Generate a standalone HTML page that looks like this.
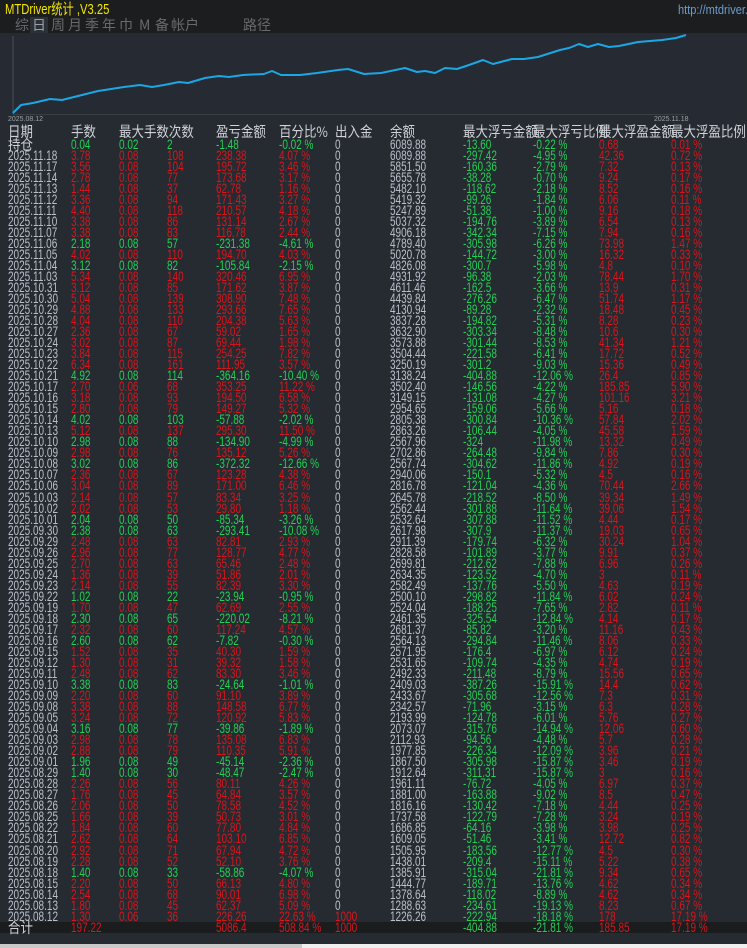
<!DOCTYPE html>
<html><head><meta charset="utf-8">
<style>
*{margin:0;padding:0;box-sizing:border-box}
html,body{width:747px;height:948px;overflow:hidden;background:#262a31;font-family:"Liberation Sans","Noto Sans CJK SC",sans-serif}
#top{position:absolute;left:0;top:0;width:747px;height:33px;background:#1c1d1f}
#title{position:absolute;left:5px;top:1px;color:#f2e600;font-size:15px;line-height:18px;transform:scaleX(0.75);transform-origin:0 0;white-space:nowrap}
#url{position:absolute;left:678px;top:2px;color:#6c9ccc;font-size:13px;transform:scaleX(0.85);transform-origin:0 0;white-space:nowrap}
.tab{position:absolute;top:16px;color:#686a6e;font-size:14px;font-family:"Noto Sans CJK SC",sans-serif;line-height:18px}
#chart{position:absolute;left:0;top:33px;width:745px;height:90px;background:#262b33}
.hd{position:absolute;top:123px;font-size:14.5px;color:#cfd3d8;font-family:"Noto Sans CJK SC",sans-serif;line-height:18px;white-space:nowrap;transform:scaleX(0.86);transform-origin:0 0}
#tb{position:absolute;left:0;top:138.5px;width:747px}
.r{position:relative;height:11.04px;line-height:11px;font-size:13.5px;white-space:nowrap}
.r i{font-style:normal;position:absolute;top:0;display:inline-block;transform:scaleX(0.74);transform-origin:0 50%;color:#b9c0ca}
.r i:nth-child(1){left:8px}
.r i:nth-child(2){left:71px}
.r i:nth-child(3){left:119px}
.r i:nth-child(4){left:167px}
.r i:nth-child(5){left:216px}
.r i:nth-child(6){left:279px}
.r i:nth-child(7){left:335px}
.r i:nth-child(8){left:390px}
.r i:nth-child(9){left:463px;color:#22d055}
.r i:nth-child(10){left:533px;color:#22d055}
.r i:nth-child(11){left:599px;color:#d8161c}
.r i:nth-child(12){left:671px;color:#d8161c}
.R i:nth-child(n+2):nth-child(-n+6){color:#d8161c}
.G i:nth-child(n+2):nth-child(-n+6){color:#22d055}
.r i.rd{color:#d8161c}
.r i.cj{font-family:"Noto Sans CJK SC",sans-serif;transform:scaleX(0.86);font-size:14.5px;color:#cfd3d8}
#tot{background:#1b1c1e}
#sb1{position:absolute;left:0;top:944px;width:302px;height:4px;background:#c9c9c9}
#sb2{position:absolute;left:302px;top:944px;width:445px;height:4px;background:#efefef}
</style></head><body>
<div id="top"></div>
<div id="title">MTDriver统计 ,V3.25</div>
<div id="url">http://mtdriver.</div>
<div style="position:absolute;left:30px;top:17px;width:18px;height:16px;background:#2c3138"></div>
<div class="tab" style="left:15px">综</div>
<div class="tab" style="left:32px;color:#9aa0a8">日</div>
<div class="tab" style="left:51px">周</div>
<div class="tab" style="left:68px">月</div>
<div class="tab" style="left:85px">季</div>
<div class="tab" style="left:102px">年</div>
<div class="tab" style="left:119px">巾</div>
<div class="tab" style="left:139px">M</div>
<div class="tab" style="left:155px">备</div>
<div class="tab" style="left:171px">帐户</div>
<div class="tab" style="left:243px">路径</div>
<div id="chart"></div>
<svg style="position:absolute;left:0;top:0" width="747" height="130">
<line x1="13" y1="36" x2="13" y2="114" stroke="#4a4f56" stroke-width="1"/>
<line x1="13" y1="114.5" x2="686" y2="114.5" stroke="#3a3f46" stroke-width="1"/>
<polyline fill="none" stroke="#1ba6e4" stroke-width="2" stroke-linejoin="round" points="13,113 21,105 33,103 50,99 62,100 74,97 98,91 124,87 140,85 152,87 164,85 179,82 188,83 205,78 219,76 229,77 243,75 264,74 272,71 281,75 300,75 317,73 338,70 348,69 364,74 381,73 405,68 417,72 425,71 435,73 445,68 457,69 469,65 483,60 493,64 512,59 524,59 538,57 560,50 569,48 579,44 588,47 598,44 609,47 619,46 638,42 650,41 662,40 676,38 686,35"/>
<text x="8" y="121" font-size="7" fill="#9aa0a8" font-family="Liberation Sans">2025.08.12</text>
<text x="654" y="121" font-size="7" fill="#9aa0a8" font-family="Liberation Sans">2025.11.18</text>
</svg>
<div class="hd" style="left:8px">日期</div>
<div class="hd" style="left:71px">手数</div>
<div class="hd" style="left:119px">最大手数次数</div>
<div class="hd" style="left:216px">盈亏金额</div>
<div class="hd" style="left:279px">百分比%</div>
<div class="hd" style="left:335px">出入金</div>
<div class="hd" style="left:390px">余额</div>
<div class="hd" style="left:463px">最大浮亏金额</div>
<div class="hd" style="left:533px">最大浮亏比例</div>
<div class="hd" style="left:599px">最大浮盈金额</div>
<div class="hd" style="left:671px">最大浮盈比例</div>
<div id="tb">
<div class="r G"><i class="cj">持仓</i><i>0.04</i><i>0.02</i><i>2</i><i>-1.48</i><i>-0.02 %</i><i>0</i><i>6089.88</i><i>-13.60</i><i>-0.22 %</i><i>0.68</i><i>0.01 %</i></div>
<div class="r R"><i>2025.11.18</i><i>3.78</i><i>0.08</i><i>108</i><i>238.38</i><i>4.07 %</i><i>0</i><i>6089.88</i><i>-297.42</i><i>-4.95 %</i><i>42.36</i><i>0.72 %</i></div>
<div class="r R"><i>2025.11.17</i><i>3.56</i><i>0.08</i><i>104</i><i>195.72</i><i>3.46 %</i><i>0</i><i>5851.50</i><i>-160.36</i><i>-2.79 %</i><i>7.32</i><i>0.13 %</i></div>
<div class="r R"><i>2025.11.14</i><i>2.78</i><i>0.08</i><i>77</i><i>173.68</i><i>3.17 %</i><i>0</i><i>5655.78</i><i>-38.28</i><i>-0.70 %</i><i>9.24</i><i>0.17 %</i></div>
<div class="r R"><i>2025.11.13</i><i>1.44</i><i>0.08</i><i>37</i><i>62.78</i><i>1.16 %</i><i>0</i><i>5482.10</i><i>-118.62</i><i>-2.18 %</i><i>8.52</i><i>0.16 %</i></div>
<div class="r R"><i>2025.11.12</i><i>3.36</i><i>0.08</i><i>94</i><i>171.43</i><i>3.27 %</i><i>0</i><i>5419.32</i><i>-99.26</i><i>-1.84 %</i><i>6.06</i><i>0.11 %</i></div>
<div class="r R"><i>2025.11.11</i><i>4.40</i><i>0.08</i><i>118</i><i>210.57</i><i>4.18 %</i><i>0</i><i>5247.89</i><i>-51.38</i><i>-1.00 %</i><i>9.16</i><i>0.18 %</i></div>
<div class="r R"><i>2025.11.10</i><i>3.38</i><i>0.08</i><i>86</i><i>131.14</i><i>2.67 %</i><i>0</i><i>5037.32</i><i>-194.76</i><i>-3.89 %</i><i>6.54</i><i>0.13 %</i></div>
<div class="r R"><i>2025.11.07</i><i>3.38</i><i>0.08</i><i>83</i><i>116.78</i><i>2.44 %</i><i>0</i><i>4906.18</i><i>-342.34</i><i>-7.15 %</i><i>7.94</i><i>0.16 %</i></div>
<div class="r G"><i>2025.11.06</i><i>2.18</i><i>0.08</i><i>57</i><i>-231.38</i><i>-4.61 %</i><i>0</i><i>4789.40</i><i>-305.98</i><i>-6.26 %</i><i>73.98</i><i>1.47 %</i></div>
<div class="r R"><i>2025.11.05</i><i>4.02</i><i>0.08</i><i>110</i><i>194.70</i><i>4.03 %</i><i>0</i><i>5020.78</i><i>-144.72</i><i>-3.00 %</i><i>16.32</i><i>0.33 %</i></div>
<div class="r G"><i>2025.11.04</i><i>3.12</i><i>0.08</i><i>82</i><i>-105.84</i><i>-2.15 %</i><i>0</i><i>4826.08</i><i>-300.7</i><i>-5.98 %</i><i>4.8</i><i>0.10 %</i></div>
<div class="r R"><i>2025.11.03</i><i>5.34</i><i>0.08</i><i>140</i><i>320.46</i><i>6.95 %</i><i>0</i><i>4931.92</i><i>-96.38</i><i>-2.03 %</i><i>78.44</i><i>1.70 %</i></div>
<div class="r R"><i>2025.10.31</i><i>3.12</i><i>0.08</i><i>85</i><i>171.62</i><i>3.87 %</i><i>0</i><i>4611.46</i><i>-162.5</i><i>-3.66 %</i><i>13.9</i><i>0.31 %</i></div>
<div class="r R"><i>2025.10.30</i><i>5.04</i><i>0.08</i><i>139</i><i>308.90</i><i>7.48 %</i><i>0</i><i>4439.84</i><i>-276.26</i><i>-6.47 %</i><i>51.74</i><i>1.17 %</i></div>
<div class="r R"><i>2025.10.29</i><i>4.88</i><i>0.08</i><i>133</i><i>293.66</i><i>7.65 %</i><i>0</i><i>4130.94</i><i>-89.28</i><i>-2.32 %</i><i>18.48</i><i>0.45 %</i></div>
<div class="r R"><i>2025.10.28</i><i>4.04</i><i>0.08</i><i>110</i><i>204.38</i><i>5.63 %</i><i>0</i><i>3837.28</i><i>-194.82</i><i>-5.31 %</i><i>8.28</i><i>0.23 %</i></div>
<div class="r R"><i>2025.10.27</i><i>2.36</i><i>0.08</i><i>67</i><i>59.02</i><i>1.65 %</i><i>0</i><i>3632.90</i><i>-303.34</i><i>-8.48 %</i><i>10.6</i><i>0.30 %</i></div>
<div class="r R"><i>2025.10.24</i><i>3.02</i><i>0.08</i><i>87</i><i>69.44</i><i>1.98 %</i><i>0</i><i>3573.88</i><i>-301.44</i><i>-8.53 %</i><i>41.34</i><i>1.21 %</i></div>
<div class="r R"><i>2025.10.23</i><i>3.84</i><i>0.08</i><i>115</i><i>254.25</i><i>7.82 %</i><i>0</i><i>3504.44</i><i>-221.58</i><i>-6.41 %</i><i>17.72</i><i>0.52 %</i></div>
<div class="r R"><i>2025.10.22</i><i>6.34</i><i>0.08</i><i>161</i><i>111.95</i><i>3.57 %</i><i>0</i><i>3250.19</i><i>-301.2</i><i>-9.03 %</i><i>15.36</i><i>0.49 %</i></div>
<div class="r G"><i>2025.10.21</i><i>4.92</i><i>0.08</i><i>114</i><i>-364.16</i><i>-10.40 %</i><i>0</i><i>3138.24</i><i>-404.88</i><i>-12.06 %</i><i>26.4</i><i>0.85 %</i></div>
<div class="r R"><i>2025.10.17</i><i>2.70</i><i>0.06</i><i>68</i><i>353.25</i><i>11.22 %</i><i>0</i><i>3502.40</i><i>-146.56</i><i>-4.22 %</i><i>185.85</i><i>5.90 %</i></div>
<div class="r R"><i>2025.10.16</i><i>3.18</i><i>0.08</i><i>93</i><i>194.50</i><i>6.58 %</i><i>0</i><i>3149.15</i><i>-131.08</i><i>-4.27 %</i><i>101.16</i><i>3.21 %</i></div>
<div class="r R"><i>2025.10.15</i><i>2.80</i><i>0.08</i><i>79</i><i>149.27</i><i>5.32 %</i><i>0</i><i>2954.65</i><i>-159.06</i><i>-5.66 %</i><i>5.16</i><i>0.18 %</i></div>
<div class="r G"><i>2025.10.14</i><i>4.02</i><i>0.08</i><i>103</i><i>-57.88</i><i>-2.02 %</i><i>0</i><i>2805.38</i><i>-300.84</i><i>-10.36 %</i><i>57.84</i><i>2.02 %</i></div>
<div class="r R"><i>2025.10.13</i><i>5.12</i><i>0.08</i><i>137</i><i>295.30</i><i>11.50 %</i><i>0</i><i>2863.26</i><i>-106.44</i><i>-4.05 %</i><i>45.58</i><i>1.59 %</i></div>
<div class="r G"><i>2025.10.10</i><i>2.98</i><i>0.08</i><i>88</i><i>-134.90</i><i>-4.99 %</i><i>0</i><i>2567.96</i><i>-324</i><i>-11.98 %</i><i>13.32</i><i>0.49 %</i></div>
<div class="r R"><i>2025.10.09</i><i>2.98</i><i>0.08</i><i>76</i><i>135.12</i><i>5.26 %</i><i>0</i><i>2702.86</i><i>-264.48</i><i>-9.84 %</i><i>7.86</i><i>0.30 %</i></div>
<div class="r G"><i>2025.10.08</i><i>3.02</i><i>0.08</i><i>86</i><i>-372.32</i><i>-12.66 %</i><i>0</i><i>2567.74</i><i>-304.62</i><i>-11.86 %</i><i>4.92</i><i>0.19 %</i></div>
<div class="r R"><i>2025.10.07</i><i>2.36</i><i>0.08</i><i>67</i><i>123.28</i><i>4.38 %</i><i>0</i><i>2940.06</i><i>-150.1</i><i>-5.32 %</i><i>4.5</i><i>0.16 %</i></div>
<div class="r R"><i>2025.10.06</i><i>3.04</i><i>0.08</i><i>89</i><i>171.00</i><i>6.46 %</i><i>0</i><i>2816.78</i><i>-121.04</i><i>-4.36 %</i><i>70.44</i><i>2.66 %</i></div>
<div class="r R"><i>2025.10.03</i><i>2.14</i><i>0.08</i><i>57</i><i>83.34</i><i>3.25 %</i><i>0</i><i>2645.78</i><i>-218.52</i><i>-8.50 %</i><i>39.34</i><i>1.49 %</i></div>
<div class="r R"><i>2025.10.02</i><i>2.02</i><i>0.08</i><i>53</i><i>29.80</i><i>1.18 %</i><i>0</i><i>2562.44</i><i>-301.88</i><i>-11.64 %</i><i>39.06</i><i>1.54 %</i></div>
<div class="r G"><i>2025.10.01</i><i>2.04</i><i>0.08</i><i>50</i><i>-85.34</i><i>-3.26 %</i><i>0</i><i>2532.64</i><i>-307.88</i><i>-11.52 %</i><i>4.44</i><i>0.17 %</i></div>
<div class="r G"><i>2025.09.30</i><i>2.38</i><i>0.08</i><i>63</i><i>-293.41</i><i>-10.08 %</i><i>0</i><i>2617.98</i><i>-307.9</i><i>-11.37 %</i><i>19.03</i><i>0.65 %</i></div>
<div class="r R"><i>2025.09.29</i><i>2.48</i><i>0.08</i><i>63</i><i>82.81</i><i>2.93 %</i><i>0</i><i>2911.39</i><i>-179.74</i><i>-6.32 %</i><i>30.24</i><i>1.04 %</i></div>
<div class="r R"><i>2025.09.26</i><i>2.96</i><i>0.08</i><i>77</i><i>128.77</i><i>4.77 %</i><i>0</i><i>2828.58</i><i>-101.89</i><i>-3.77 %</i><i>9.91</i><i>0.37 %</i></div>
<div class="r R"><i>2025.09.25</i><i>2.70</i><i>0.08</i><i>63</i><i>65.46</i><i>2.48 %</i><i>0</i><i>2699.81</i><i>-212.62</i><i>-7.88 %</i><i>6.96</i><i>0.26 %</i></div>
<div class="r R"><i>2025.09.24</i><i>1.36</i><i>0.08</i><i>39</i><i>51.86</i><i>2.01 %</i><i>0</i><i>2634.35</i><i>-123.52</i><i>-4.70 %</i><i>3</i><i>0.11 %</i></div>
<div class="r R"><i>2025.09.23</i><i>2.14</i><i>0.08</i><i>55</i><i>82.39</i><i>3.30 %</i><i>0</i><i>2582.49</i><i>-137.76</i><i>-5.50 %</i><i>4.63</i><i>0.19 %</i></div>
<div class="r G"><i>2025.09.22</i><i>1.02</i><i>0.08</i><i>22</i><i>-23.94</i><i>-0.95 %</i><i>0</i><i>2500.10</i><i>-298.82</i><i>-11.84 %</i><i>6.02</i><i>0.24 %</i></div>
<div class="r R"><i>2025.09.19</i><i>1.70</i><i>0.08</i><i>47</i><i>62.69</i><i>2.55 %</i><i>0</i><i>2524.04</i><i>-188.25</i><i>-7.65 %</i><i>2.82</i><i>0.11 %</i></div>
<div class="r G"><i>2025.09.18</i><i>2.30</i><i>0.08</i><i>65</i><i>-220.02</i><i>-8.21 %</i><i>0</i><i>2461.35</i><i>-325.54</i><i>-12.84 %</i><i>4.14</i><i>0.17 %</i></div>
<div class="r R"><i>2025.09.17</i><i>2.32</i><i>0.08</i><i>60</i><i>117.24</i><i>4.57 %</i><i>0</i><i>2681.37</i><i>-85.82</i><i>-3.20 %</i><i>11.16</i><i>0.43 %</i></div>
<div class="r G"><i>2025.09.16</i><i>2.60</i><i>0.08</i><i>62</i><i>-7.82</i><i>-0.30 %</i><i>0</i><i>2564.13</i><i>-294.84</i><i>-11.46 %</i><i>8.06</i><i>0.33 %</i></div>
<div class="r R"><i>2025.09.15</i><i>1.52</i><i>0.08</i><i>35</i><i>40.30</i><i>1.59 %</i><i>0</i><i>2571.95</i><i>-176.4</i><i>-6.97 %</i><i>6.12</i><i>0.24 %</i></div>
<div class="r R"><i>2025.09.12</i><i>1.30</i><i>0.08</i><i>31</i><i>39.32</i><i>1.58 %</i><i>0</i><i>2531.65</i><i>-109.74</i><i>-4.35 %</i><i>4.74</i><i>0.19 %</i></div>
<div class="r R"><i>2025.09.11</i><i>2.48</i><i>0.08</i><i>62</i><i>83.30</i><i>3.46 %</i><i>0</i><i>2492.33</i><i>-211.48</i><i>-8.79 %</i><i>15.56</i><i>0.65 %</i></div>
<div class="r G"><i>2025.09.10</i><i>3.38</i><i>0.08</i><i>83</i><i>-24.64</i><i>-1.01 %</i><i>0</i><i>2409.03</i><i>-387.26</i><i>-15.91 %</i><i>14.4</i><i>0.62 %</i></div>
<div class="r R"><i>2025.09.09</i><i>2.20</i><i>0.08</i><i>60</i><i>91.10</i><i>3.89 %</i><i>0</i><i>2433.67</i><i>-305.68</i><i>-12.56 %</i><i>7.3</i><i>0.31 %</i></div>
<div class="r R"><i>2025.09.08</i><i>3.38</i><i>0.08</i><i>88</i><i>148.58</i><i>6.77 %</i><i>0</i><i>2342.57</i><i>-71.96</i><i>-3.15 %</i><i>6.3</i><i>0.28 %</i></div>
<div class="r R"><i>2025.09.05</i><i>3.24</i><i>0.08</i><i>72</i><i>120.92</i><i>5.83 %</i><i>0</i><i>2193.99</i><i>-124.78</i><i>-6.01 %</i><i>5.76</i><i>0.27 %</i></div>
<div class="r G"><i>2025.09.04</i><i>3.16</i><i>0.08</i><i>77</i><i>-39.86</i><i>-1.89 %</i><i>0</i><i>2073.07</i><i>-315.76</i><i>-14.94 %</i><i>12.06</i><i>0.60 %</i></div>
<div class="r R"><i>2025.09.03</i><i>2.98</i><i>0.08</i><i>78</i><i>135.08</i><i>6.83 %</i><i>0</i><i>2112.93</i><i>-94.56</i><i>-4.48 %</i><i>5.7</i><i>0.28 %</i></div>
<div class="r R"><i>2025.09.02</i><i>2.88</i><i>0.08</i><i>79</i><i>110.35</i><i>5.91 %</i><i>0</i><i>1977.85</i><i>-226.34</i><i>-12.09 %</i><i>3.96</i><i>0.21 %</i></div>
<div class="r G"><i>2025.09.01</i><i>1.96</i><i>0.08</i><i>49</i><i>-45.14</i><i>-2.36 %</i><i>0</i><i>1867.50</i><i>-305.98</i><i>-15.87 %</i><i>3.46</i><i>0.19 %</i></div>
<div class="r G"><i>2025.08.29</i><i>1.40</i><i>0.08</i><i>30</i><i>-48.47</i><i>-2.47 %</i><i>0</i><i>1912.64</i><i>-311.31</i><i>-15.87 %</i><i>3</i><i>0.16 %</i></div>
<div class="r R"><i>2025.08.28</i><i>2.26</i><i>0.08</i><i>56</i><i>80.11</i><i>4.26 %</i><i>0</i><i>1961.11</i><i>-76.72</i><i>-4.05 %</i><i>6.97</i><i>0.37 %</i></div>
<div class="r R"><i>2025.08.27</i><i>1.76</i><i>0.08</i><i>45</i><i>64.84</i><i>3.57 %</i><i>0</i><i>1881.00</i><i>-163.88</i><i>-9.02 %</i><i>8.5</i><i>0.47 %</i></div>
<div class="r R"><i>2025.08.26</i><i>2.06</i><i>0.08</i><i>50</i><i>78.58</i><i>4.52 %</i><i>0</i><i>1816.16</i><i>-130.42</i><i>-7.18 %</i><i>4.44</i><i>0.25 %</i></div>
<div class="r R"><i>2025.08.25</i><i>1.66</i><i>0.08</i><i>39</i><i>50.73</i><i>3.01 %</i><i>0</i><i>1737.58</i><i>-122.79</i><i>-7.28 %</i><i>3.24</i><i>0.19 %</i></div>
<div class="r R"><i>2025.08.22</i><i>1.84</i><i>0.08</i><i>60</i><i>77.80</i><i>4.84 %</i><i>0</i><i>1686.85</i><i>-64.16</i><i>-3.98 %</i><i>3.98</i><i>0.25 %</i></div>
<div class="r R"><i>2025.08.21</i><i>2.62</i><i>0.08</i><i>64</i><i>103.10</i><i>6.85 %</i><i>0</i><i>1609.05</i><i>-51.46</i><i>-3.41 %</i><i>12.72</i><i>0.82 %</i></div>
<div class="r R"><i>2025.08.20</i><i>2.92</i><i>0.08</i><i>71</i><i>67.94</i><i>4.72 %</i><i>0</i><i>1505.95</i><i>-183.56</i><i>-12.77 %</i><i>4.5</i><i>0.30 %</i></div>
<div class="r R"><i>2025.08.19</i><i>2.28</i><i>0.08</i><i>52</i><i>52.10</i><i>3.76 %</i><i>0</i><i>1438.01</i><i>-209.4</i><i>-15.11 %</i><i>5.22</i><i>0.38 %</i></div>
<div class="r G"><i>2025.08.18</i><i>1.40</i><i>0.08</i><i>33</i><i>-58.86</i><i>-4.07 %</i><i>0</i><i>1385.91</i><i>-315.04</i><i>-21.81 %</i><i>9.34</i><i>0.65 %</i></div>
<div class="r R"><i>2025.08.15</i><i>2.20</i><i>0.08</i><i>50</i><i>66.13</i><i>4.80 %</i><i>0</i><i>1444.77</i><i>-189.71</i><i>-13.76 %</i><i>4.62</i><i>0.34 %</i></div>
<div class="r R"><i>2025.08.14</i><i>2.54</i><i>0.08</i><i>68</i><i>90.01</i><i>6.98 %</i><i>0</i><i>1378.64</i><i>-118.02</i><i>-8.89 %</i><i>4.62</i><i>0.34 %</i></div>
<div class="r R"><i>2025.08.13</i><i>1.80</i><i>0.08</i><i>45</i><i>62.37</i><i>5.09 %</i><i>0</i><i>1288.63</i><i>-234.61</i><i>-19.13 %</i><i>8.23</i><i>0.67 %</i></div>
<div class="r R"><i>2025.08.12</i><i>1.30</i><i>0.06</i><i>36</i><i>226.26</i><i>22.63 %</i><i class="rd">1000</i><i>1226.26</i><i>-222.94</i><i>-18.18 %</i><i>178</i><i>17.19 %</i></div>
<div class="r R" id="tot"><i class="cj">合计</i><i>197.22</i><i></i><i></i><i>5086.4</i><i>508.84 %</i><i class="rd">1000</i><i></i><i>-404.88</i><i>-21.81 %</i><i>185.85</i><i>17.19 %</i></div>
</div>
<div id="sb1"></div><div id="sb2"></div>
</body></html>
